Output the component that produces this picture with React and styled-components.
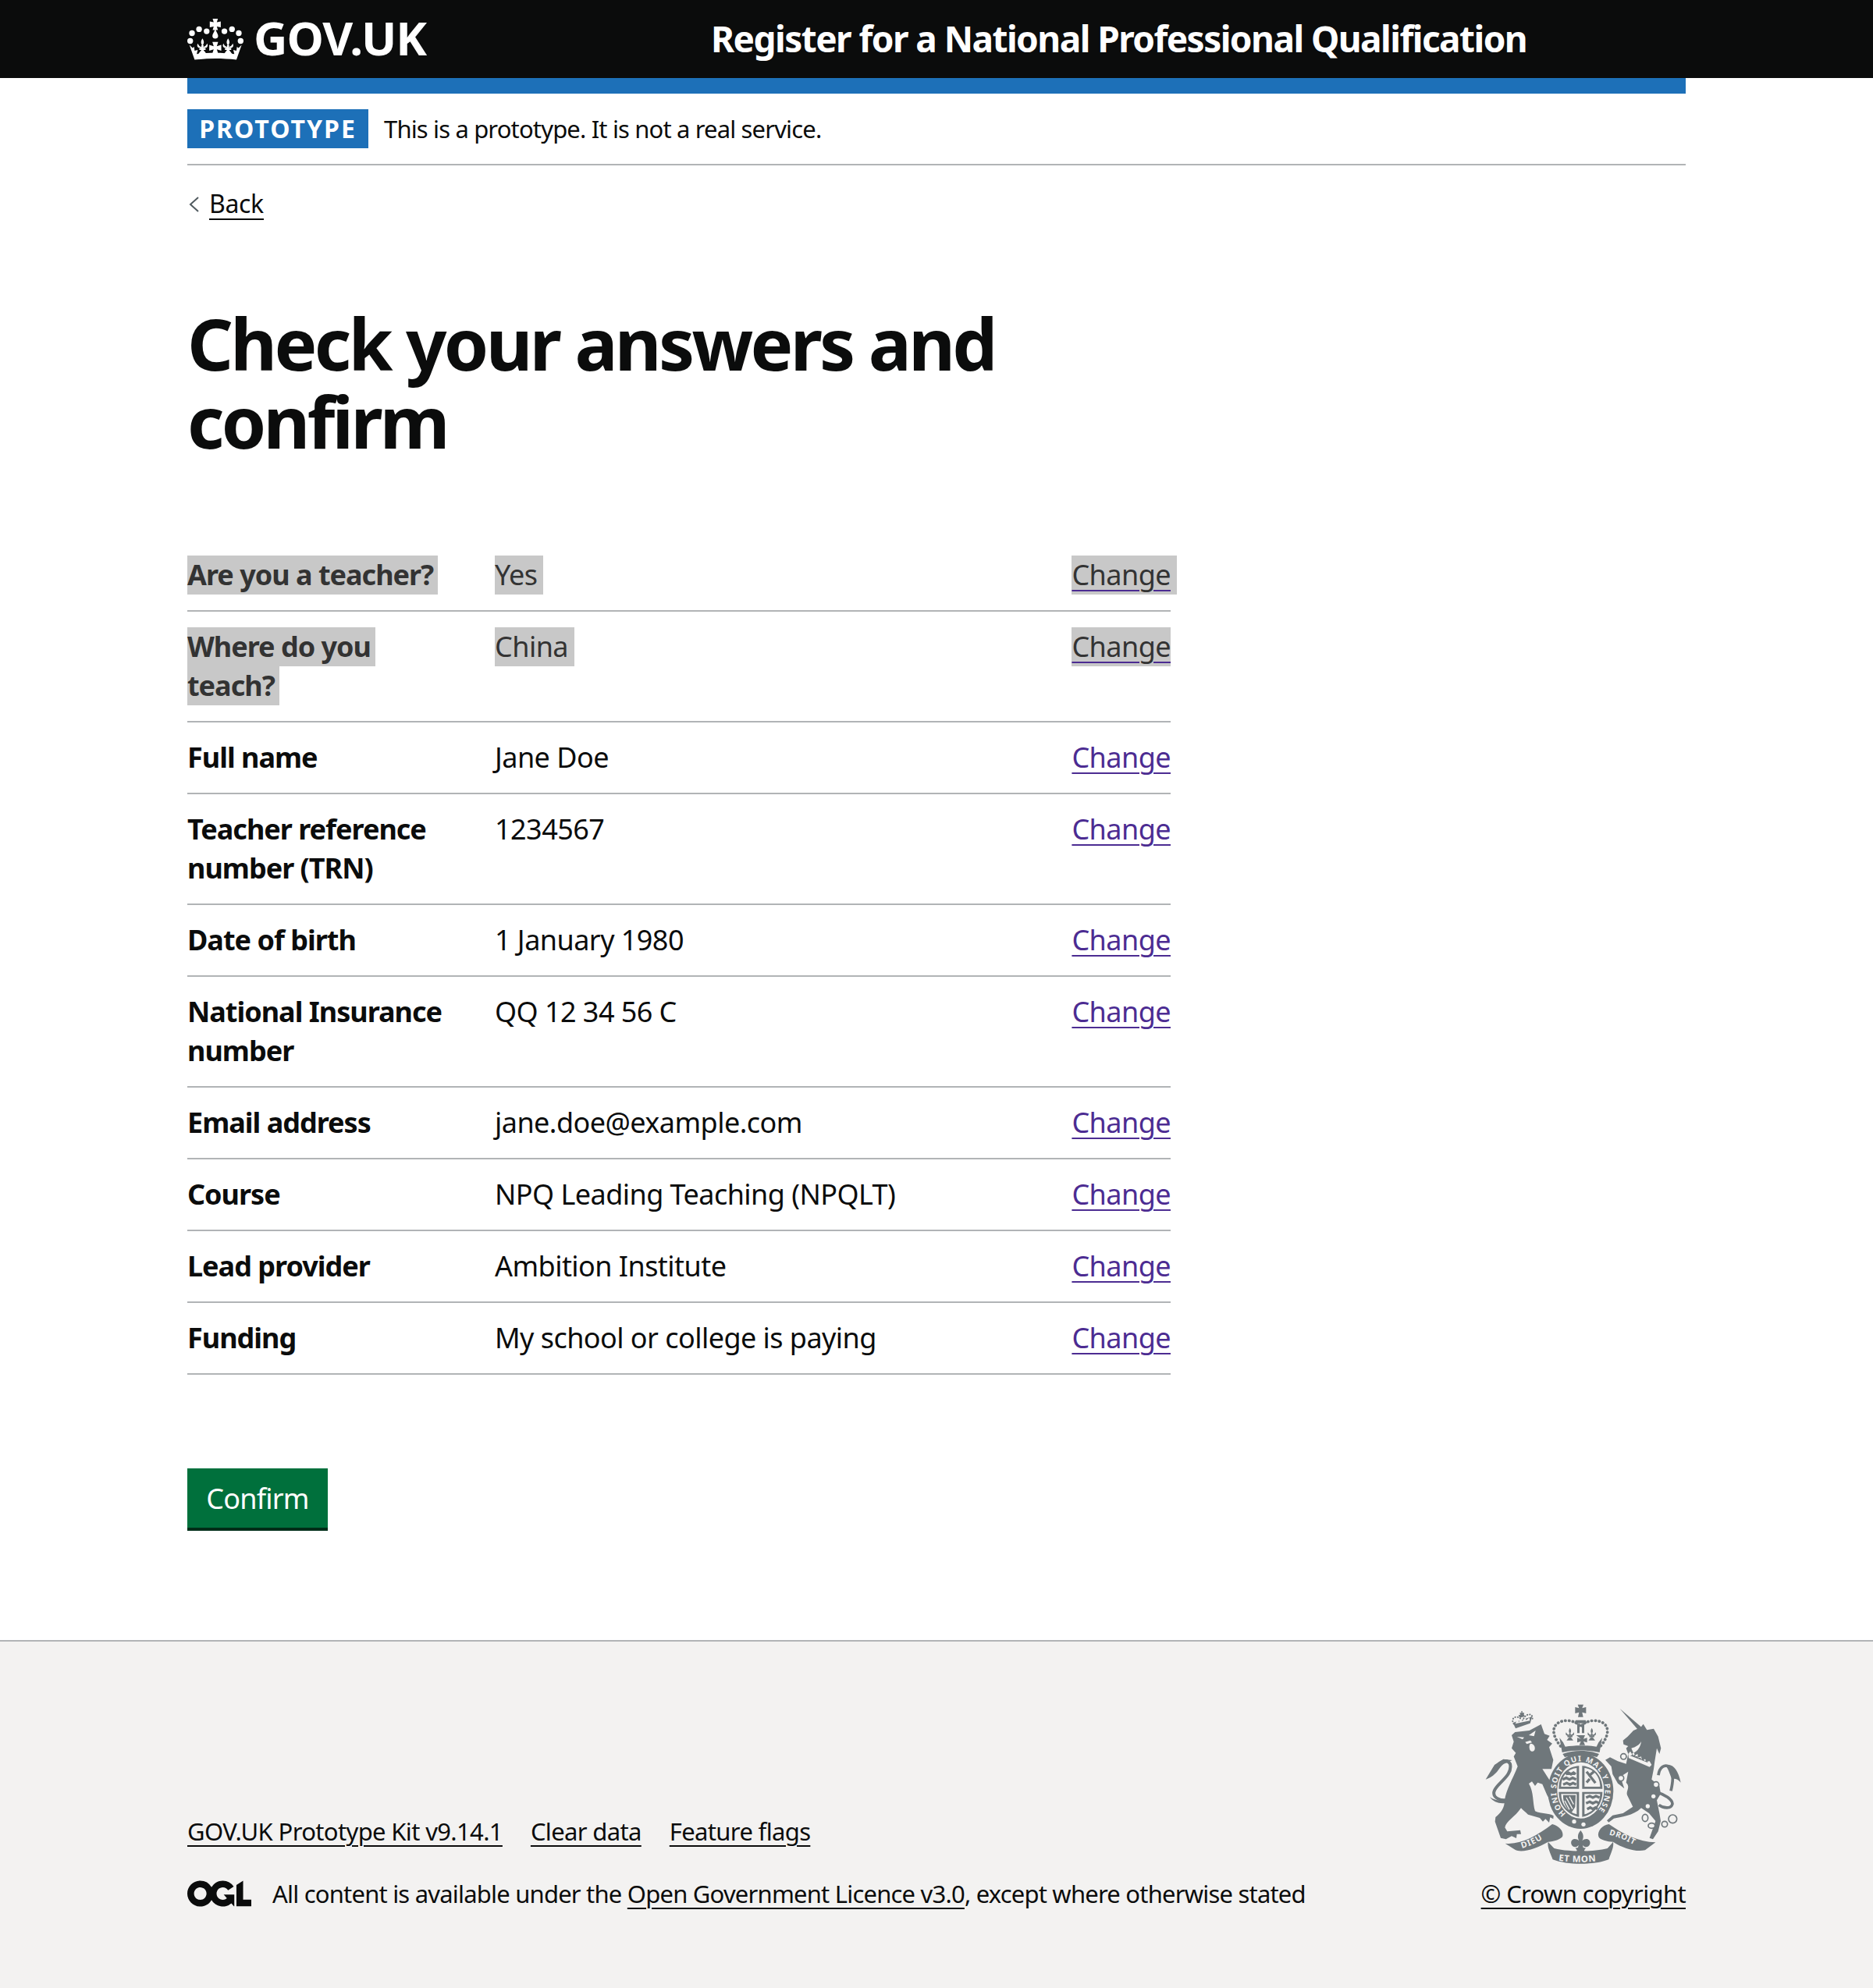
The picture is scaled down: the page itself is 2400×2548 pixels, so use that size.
import styled, { createGlobalStyle } from "styled-components";

const GlobalStyle = createGlobalStyle`
    body {
        margin: 0;
        background: #fff;
        color: #0b0c0c;
        font-family: "Noto Sans", "Liberation Sans", sans-serif;
    }
`;

const Page = styled.div`
    width: 2400px;
    height: 2548px;
    display: flex;
    flex-direction: column;
`;

const Header = styled.header`
    height: 100px;
    background: #0b0c0c;
    color: #fff;
`;

const HeaderInner = styled.div`
    width: 1920px;
    margin: 0 auto;
    height: 100%;
    display: flex;
    align-items: center;
`;

const LogoLink = styled.a`
    width: 671px;
    display: flex;
    align-items: center;
    gap: 12px;
    font-weight: 700;
    font-size: 60px;
    letter-spacing: -1px;
`;

const LogoText = styled.span`
    margin-bottom: 5px;
`;

const ServiceName = styled.a`
    font-size: 46px;
    font-weight: 700;
    letter-spacing: -1.56px;
    white-space: nowrap;
    margin-top: -2px;
`;

const Wrapper = styled.div`
    width: 1920px;
    margin: 0 auto;
`;

const BlueBar = styled.div`
    height: 20px;
    background: #1d70b8;
`;

const PhaseBanner = styled.div`
    height: 92px;
    box-sizing: border-box;
    padding-top: 20px;
    display: flex;
    align-items: flex-start;
    gap: 20px;
    border-bottom: 2px solid #b1b4b6;
`;

const Tag = styled.strong`
    height: 50px;
    width: 232px;
    background: #1d70b8;
    color: #fff;
    font-size: 32px;
    line-height: 50px;
    text-align: center;
    letter-spacing: 2px;
`;

const PhaseText = styled.span`
    font-size: 31px;
    line-height: 50px;
    letter-spacing: -0.85px;
`;

const BackLink = styled.a`
    display: flex;
    align-items: center;
    gap: 12px;
    margin-top: 30px;
    margin-left: 2px;
    font-size: 32px;
    line-height: 38px;
    letter-spacing: -0.4px;
`;

const BackText = styled.span`
    border-bottom: 2px solid #0b0c0c;
`;

const Title = styled.h1`
    margin: 108px 0 0;
    width: 1260px;
    font-size: 92px;
    line-height: 100px;
    font-weight: 700;
    letter-spacing: -3.7px;
`;

const SummaryList = styled.dl`
    margin: 102px 0 0;
    width: 1260px;
`;

const Row = styled.div`
    display: grid;
    grid-template-columns: 394px 1fr auto;
    padding: 20px 0;
    border-bottom: 2px solid #b1b4b6;
    font-size: 36px;
    line-height: 50px;
    letter-spacing: -0.55px;
`;

const Key = styled.dt`
    width: 340px;
    font-weight: 700;
    letter-spacing: -1px;
`;

const Value = styled.dd`
    margin: 0;
`;

const Actions = styled.dd`
    margin: 0;
`;

const Mark = styled.span`
    background: #c8c8c8;
    color: #333;
    padding: 0 ${(p) => p.$pad}px 1px 0;
    margin-right: ${(p) => (p.$overflow ? -p.$pad : 0)}px;
    -webkit-box-decoration-break: clone;
    box-decoration-break: clone;
`;

const ChangeLink = styled.a`
    color: ${(p) => (p.$muted ? "#333" : "#4c2c92")};
    text-decoration: underline;
    text-decoration-color: #4c2c92;
    text-decoration-thickness: 2px;
    text-underline-offset: 6px;
`;

const ConfirmButton = styled.button`
    display: block;
    margin-top: 120px;
    width: 180px;
    height: 80px;
    padding: 0;
    border: 0;
    border-bottom: 4px solid #002d18;
    background: #00703c;
    color: #fff;
    font-family: inherit;
    font-size: 36px;
    letter-spacing: -0.8px;
`;

const Footer = styled.footer`
    margin-top: 140px;
    flex: 1;
    background: #f3f2f1;
    border-top: 2px solid #b1b4b6;
`;

const FooterInner = styled.div`
    width: 1920px;
    margin: 0 auto;
    padding-top: 80px;
    display: flex;
    justify-content: space-between;
    align-items: flex-end;
`;

const FooterMeta = styled.div`
    font-size: 31px;
    line-height: 40px;
    letter-spacing: -0.8px;
`;

const FooterLinks = styled.div`
    display: flex;
    gap: 36px;
    margin-bottom: 40px;
    letter-spacing: -0.65px;
`;

const FooterLink = styled.a`
    text-decoration: underline;
    text-decoration-thickness: 2px;
    text-underline-offset: 6px;
`;

const LicenceRow = styled.div`
    display: flex;
    align-items: center;
    gap: 27px;
`;

const Copyright = styled.div`
    display: flex;
    flex-direction: column;
    align-items: center;
    gap: 17px;
    font-size: 31px;
    line-height: 40px;
    letter-spacing: -0.65px;
`;

const Chevron = () => (
    <svg width="14" height="20" viewBox="0 0 14 20" aria-hidden="true">
        <path d="M12 1L2 10l10 9" fill="none" stroke="#505a5f" strokeWidth="2" />
    </svg>
);

const Fleur = ({ x, size = 1, y = 0 }) => (
    <g transform={`translate(${x} ${y}) scale(${size})`}>
        <path d="M0 108c-8 12-6 20 0 28 6-8 8-16 0-28z" />
        <path d="M-18 128c-6 12 2 18 14 18v-6c-6 0-10-4-14-12zM18 128c6 12-2 18-14 18v-6c6 0 10-4 14-12z" />
        <path d="M-4 134h8v14h-8zM-12 146h24v6h-24z" />
        <path d="M-4 152l-12 16h32l-12-16z" />
    </g>
);

const CrownMark = () => (
    <svg width="73" height="53" viewBox="30 33 218 158" fill="#fff" aria-hidden="true">
        <circle cx="48" cy="88" r="11" />
        <circle cx="75" cy="73" r="11" />
        <circle cx="104" cy="81" r="11" />
        <circle cx="172" cy="81" r="11" />
        <circle cx="201" cy="73" r="11" />
        <circle cx="227" cy="88" r="11" />
        <circle cx="41" cy="118" r="11" />
        <circle cx="234" cy="118" r="11" />
        <path d="M127 33h20l-4 13 15-3v23l-15-3 4 13h-20l4-13-15 3V43l15 3z" />
        <path d="M137 72c-4 12-11 20-11 27 0 6 5 10 11 10s11-4 11-10c0-7-7-15-11-27z" />
        <Fleur x={88} />
        <Fleur x={186} />
        <path d="M126 122h22l-5 16 17-5v22l-17-5 5 16h-22l5-16-17 5v-22l17 5z" />
        <path d="M38 133l12 12 6-5 2 15 12-3-4 16c44-6 99-6 144 0l-4-16 12 3 2-15 6 5 12-12-20 57c-53-6-108-6-160 0z" />
    </svg>
);

const OglLogo = () => (
    <svg width="82" height="34" viewBox="0 0 483.2 195.7" aria-hidden="true">
        <path
            fill="#0b0c0c"
            d="M421.5 142.8V.1l-50.7 32.3v161.1h112.4v-50.7zm-122.3-9.6A47.12 47.12 0 0 1 221 97.8c0-26 21.1-47.1 47.1-47.1 16.7 0 31.4 8.7 39.7 21.8l42.7-27.2A97.63 97.63 0 0 0 268.1 0c-36.5 0-68.3 20.1-85.1 49.7A98 98 0 0 0 97.8 0C43.9 0 0 43.9 0 97.8s43.9 97.8 97.8 97.8c36.5 0 68.3-20.1 85.1-49.7a97.76 97.76 0 0 0 149.6 25.4l19.4 22.2h3v-87.8h-80l24.3 27.5zM97.8 145c-26 0-47.1-21.1-47.1-47.1s21.1-47.1 47.1-47.1 47.2 21 47.2 47S123.8 145 97.8 145"
        />
    </svg>
);

const crestBg = "#f3f2f1";
const crestFg = "#6f777b";
const crestFont = "Noto Sans, sans-serif";

const Crest = () => (
    <svg width="252" height="206" viewBox="130 70 756 618" fill={crestFg} aria-hidden="true">
        {/* lion */}
        <path d="M232 190L245 178 300 172 345 148 358 185 378 192 368 208 388 222 376 236 392 285 385 320 350 320 408 410 405 440 385 450 368 420 350 378 332 372 322 385 310 368 298 376C318 410 312 450 322 482 345 494 375 488 393 500L392 512 380 506 376 526 362 512 352 522 340 508 295 495C285 485 275 478 268 470 245 505 210 520 206 545L215 560 265 555 268 570 252 570 250 586 232 578 210 590 190 585 168 522 170 505C190 490 205 470 205 440 210 400 240 350 255 310L240 272 248 258 232 240 240 215z" />
        <path d="M222 436c-32 12-62-6-58-28 6-32 74-60 62-108-12-22-42-8-56 16" fill="none" stroke={crestFg} strokeWidth="12" />
        <path d="M132 360l34-56 34-22 34 4-26 12c-24 6-24 44-76 62z" />
        <path d="M148 428c20 14 50 18 68 8l-4 14c-24 6-50-2-64-22z" />
        <path d="M304 222c14 0 20 14 16 24-4 8-14 8-18 0-3-8-4-16 2-24z" fill={crestBg} />
        <path d="M252 196l28 2-6 8zM324 172l-26 18 20 4zM284 216l20-6 6 8-20 6z" fill={crestBg} />
        {/* lion crown */}
        <path d="M237 142l74-24-8 26-56 20z" />
        <path d="M246 146l8-16 6 10 6-16 8 12 8-16 6 12 12-10 2 12z" fill={crestBg} />
        <g fill="none" stroke={crestFg} strokeWidth="6" strokeDasharray="1 9" strokeLinecap="round">
            <path d="M240 146c-14-22 10-34 26-20M278 126c12-24 42-20 32 8" />
        </g>
        <path d="M258 112h7l-2-8h7l-2-6h6l-1 6h7l-1 8 5 5-21 6z" />
        {/* royal crown */}
        <g fill="none" stroke={crestFg} strokeWidth="11" strokeDasharray="1 13.5" strokeLinecap="round">
            <path d="M420 232c-50-62-22-100 30-98 22 2 40 12 47 24 7-12 25-22 47-24 52-2 80 36 30 98" />
        </g>
        <path d="M486 72h22l-5 14 15-4v24l-15-4 4 18h-20l4-18-15 4V82l15 4z" />
        <path d="M484 146h9v36h-9zM502 146h9v36h-9zM478 132h38l6 12h-50z" />
        <g transform="translate(0 80)">
            <Fleur x={456} size={0.8} y={-4} />
            <Fleur x={540} size={0.8} y={-4} />
        </g>
        <path d="M480 190h34l-6 14 14-4v18l-14-4 6 14h-22l6-14-14 4v-18l14 4z" />
        <path d="M416 200l14 18 8 16c34-6 86-6 120 0l8-16 14-18-10 56c-44-10-100-10-144 0z" />
        <path d="M428 262c42-16 98-16 140 0l-8 12c-40-10-84-10-124 0z" />
        {/* garter */}
        <ellipse cx="497" cy="405" rx="126" ry="145" />
        <ellipse cx="497" cy="402" rx="90" ry="108" fill={crestBg} />
        <path id="crest-garter" d="M441 492A94 112 0 1 1 553 492" fill="none" />
        <text fontFamily={crestFont} fontSize="29" fontWeight="700" fill={crestBg} textLength="505" lengthAdjust="spacing">
            <textPath href="#crest-garter">HONI SOIT QUI MAL Y PENSE</textPath>
        </text>
        {/* shield quarters */}
        <path d="M413 396c0-52 34-86 78-88v88zM503 308c44 2 78 36 78 88h-78zM413 408h78v96c-44-8-78-46-78-96zM503 408h78c0 50-34 88-78 96z" />
        <g fill={crestBg}>
            <path d="M422 388c0-40 24-68 60-72v72zM512 316c36 4 60 32 60 72h-60zM422 416h60v78c-34-8-60-38-60-78zM512 416h60c0 40-26 70-60 78z" />
        </g>
        <g fill="none" stroke={crestFg} strokeWidth="10">
            <path d="M440 340l10-6 10 6 10-6 8 6M428 360l14-6 12 6 12-6 14 6M430 380l14-6 12 6 12-6 12 6" />
            <path d="M520 330l34 44M548 330l-16 14M520 372l12-14" />
            <path d="M518 430l14-6 12 6 12-6 14 6M518 452l14-6 12 6 12-6 14 6M522 474l12-6 10 6 10-6 8 6" />
        </g>
        <path d="M430 420h48l-2 46-14 22c-18-10-34-40-32-68z" />
        <path d="M442 430l24 44M454 426l16 30M436 442l18 34" fill="none" stroke={crestBg} strokeWidth="4" />
        <circle cx="472" cy="522" r="8" fill={crestBg} />
        <circle cx="508" cy="533" r="8" fill={crestBg} />
        {/* unicorn */}
        <path d="M648 88l84 72-10 14z" />
        <path d="M728 160L738 147 752 170 778 165 795 195 806 240 800 262 790 240 782 290 778 320 770 360 800 385 805 415 790 440 800 490 805 520 795 560 775 590 762 585 785 520 760 490 730 470C700 500 650 505 625 510L605 525 598 518 620 498 660 490 698 465 676 420C670 405 690 390 672 372L680 330 650 350 665 395 640 375 620 340 615 310 592 285 610 275 640 290 672 300 680 262 672 240 680 232 662 225 660 210 678 195 700 172z" />
        <path d="M692 240c16-4 30-12 38-26-2 20-14 38-30 44z" fill={crestBg} />
        <path d="M680 262l8-10 6 10 8-6 4 12 10-6 2 14 12-4 2 12 14-2 2 10 14-2 8 14-8 8-80-34z" fill={crestBg} />
        <path d="M692 268l4-6 4 6 6-4 2 8 8-2 2 8 10-2 2 8 10-2 2 6 10 0 4 8-70-28z" />
        <path d="M788 408c34 10 62 30 62 46-4 20-34 18-52 4M796 344c4-32 24-44 44-32 14 14 14 52 4 92" fill="none" stroke={crestFg} strokeWidth="11" />
        <path d="M824 306c26-10 48 16 58 66-12-14-22-16-34-14-8-16-10-32-24-52z" />
        <circle cx="662" cy="272" r="11" fill="none" stroke={crestFg} strokeWidth="5" />
        <circle cx="652" cy="355" r="11" fill={crestBg} stroke={crestFg} strokeWidth="5" />
        <circle cx="787" cy="380" r="11" fill={crestBg} stroke={crestFg} strokeWidth="5" />
        <circle cx="777" cy="425" r="8" fill={crestBg} />
        <circle cx="755" cy="463" r="8" fill={crestBg} />
        <ellipse cx="745" cy="508" rx="11" ry="14" fill={crestBg} stroke={crestFg} strokeWidth="5" />
        <ellipse cx="770" cy="538" rx="13" ry="10" fill={crestBg} stroke={crestFg} strokeWidth="5" />
        <circle cx="820" cy="532" r="11" fill={crestBg} stroke={crestFg} strokeWidth="5" />
        <circle cx="851" cy="512" r="16" fill={crestBg} stroke={crestFg} strokeWidth="5" />
        {/* motto ribbon */}
        <path d="M207 606C270 612 330 575 388 532 415 538 432 560 428 578 424 590 392 600 372 600 330 625 270 645 245 630z" />
        <path d="M372 600c-4 20 8 40 18 68l10-38z" />
        <path d="M385 622c55 18 170 18 225 0l-5 46c-55 22-160 22-215 0z" />
        <path d="M622 600c4 20-8 40-17 68l-9-38z" />
        <path d="M566 580C560 560 580 535 606 532 660 570 720 600 785 602L745 632C710 640 660 625 622 600 600 600 570 592 566 580z" />
        <path id="crest-dieu" d="M272 625c38-10 73-30 110-59" fill="none" />
        <text fontFamily={crestFont} fontSize="32" fontWeight="700" fill={crestBg} letterSpacing="3">
            <textPath href="#crest-dieu">DIEU</textPath>
        </text>
        <path id="crest-mon" d="M412 672c58 8 118 8 173-2" fill="none" />
        <text fontFamily={crestFont} fontSize="34" fontWeight="700" fill={crestBg} letterSpacing="2">
            <textPath href="#crest-mon">ET MON</textPath>
        </text>
        <path id="crest-droit" d="M606 573c39 9 84 29 122 53" fill="none" />
        <text fontFamily={crestFont} fontSize="30" fontWeight="700" fill={crestBg} letterSpacing="2">
            <textPath href="#crest-droit">DROIT</textPath>
        </text>
        {/* fleur under the shield */}
        <path d="M497 556c-10 12-14 24-6 40-14-14-34-6-30 12 4 14 20 16 28 4l-2 10-10 2 6 8-2 6h32l-2-6 6-8-10-2-2-10c8 12 24 10 28-4 4-18-16-26-30-12 8-16 4-28-6-40z" />
    </svg>
);

const rows = [
    { key: "Are you a teacher?", value: "Yes", muted: true, linkPad: 8 },
    { key: "Where do you teach?", value: "China", muted: true },
    { key: "Full name", value: "Jane Doe" },
    { key: "Teacher reference number (TRN)", value: "1234567" },
    { key: "Date of birth", value: "1 January 1980" },
    { key: "National Insurance number", value: "QQ 12 34 56 C" },
    { key: "Email address", value: "jane.doe@example.com" },
    { key: "Course", value: "NPQ Leading Teaching (NPQLT)" },
    { key: "Lead provider", value: "Ambition Institute" },
    { key: "Funding", value: "My school or college is paying" },
];

const App = () => {
    return (
        <Page>
            <GlobalStyle />
            <Header>
                <HeaderInner>
                    <LogoLink>
                        <CrownMark />
                        <LogoText>GOV.UK</LogoText>
                    </LogoLink>
                    <ServiceName>Register for a National Professional Qualification</ServiceName>
                </HeaderInner>
            </Header>
            <Wrapper>
                <BlueBar />
                <PhaseBanner>
                    <Tag>PROTOTYPE</Tag>
                    <PhaseText>This is a prototype. It is not a real service.</PhaseText>
                </PhaseBanner>
                <BackLink>
                    <Chevron />
                    <BackText>Back</BackText>
                </BackLink>
                <Title>Check your answers and confirm</Title>
                <SummaryList>
                    {rows.map((row) => (
                        <Row key={row.key}>
                            <Key>{row.muted ? <Mark $pad={6}>{row.key}</Mark> : row.key}</Key>
                            <Value>{row.muted ? <Mark $pad={8}>{row.value}</Mark> : row.value}</Value>
                            <Actions>
                                {row.muted ? (
                                    <Mark $pad={row.linkPad || 0} $overflow>
                                        <ChangeLink $muted>Change</ChangeLink>
                                    </Mark>
                                ) : (
                                    <ChangeLink>Change</ChangeLink>
                                )}
                            </Actions>
                        </Row>
                    ))}
                </SummaryList>
                <ConfirmButton>Confirm</ConfirmButton>
            </Wrapper>
            <Footer>
                <FooterInner>
                    <FooterMeta>
                        <FooterLinks>
                            <FooterLink>GOV.UK Prototype Kit v9.14.1</FooterLink>
                            <FooterLink>Clear data</FooterLink>
                            <FooterLink>Feature flags</FooterLink>
                        </FooterLinks>
                        <LicenceRow>
                            <OglLogo />
                            <span>
                                All content is available under the{" "}
                                <FooterLink>Open Government Licence v3.0</FooterLink>, except where otherwise stated
                            </span>
                        </LicenceRow>
                    </FooterMeta>
                    <Copyright>
                        <Crest />
                        <FooterLink>© Crown copyright</FooterLink>
                    </Copyright>
                </FooterInner>
            </Footer>
        </Page>
    );
};

export default App;
